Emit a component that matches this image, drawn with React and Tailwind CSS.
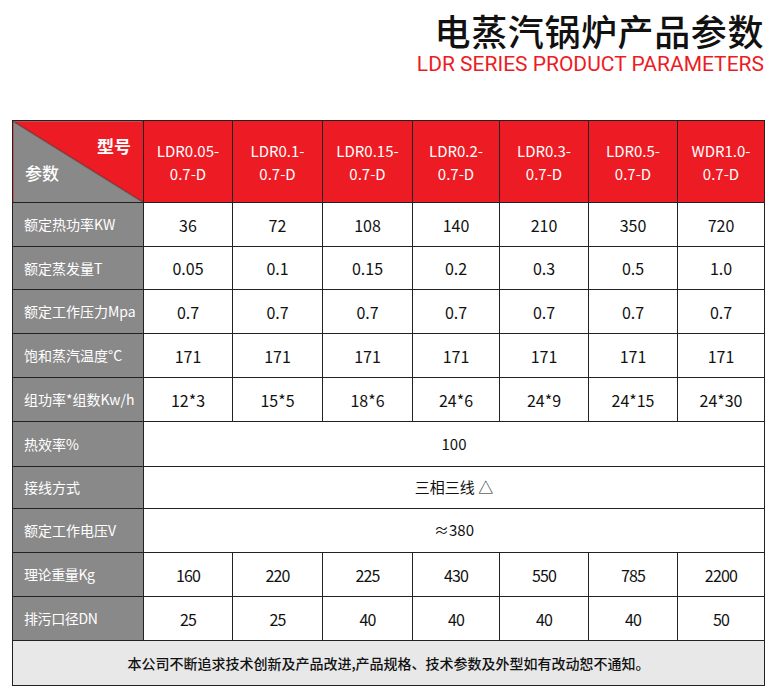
import React from "react";

const models = [
  ["LDR0.05-", "0.7-D"],
  ["LDR0.1-", "0.7-D"],
  ["LDR0.15-", "0.7-D"],
  ["LDR0.2-", "0.7-D"],
  ["LDR0.3-", "0.7-D"],
  ["LDR0.5-", "0.7-D"],
  ["WDR1.0-", "0.7-D"],
];

const rows = [
  { label: "额定热功率KW", h: "h-[44px]", vals: ["36", "72", "108", "140", "210", "350", "720"] },
  { label: "额定蒸发量T", h: "h-[43px]", vals: ["0.05", "0.1", "0.15", "0.2", "0.3", "0.5", "1.0"] },
  { label: "额定工作压力Mpa", h: "h-[44px]", vals: ["0.7", "0.7", "0.7", "0.7", "0.7", "0.7", "0.7"] },
  { label: "饱和蒸汽温度°C", h: "h-[44px]", vals: ["171", "171", "171", "171", "171", "171", "171"] },
  { label: "组功率*组数Kw/h", h: "h-[44px]", vals: ["12*3", "15*5", "18*6", "24*6", "24*9", "24*15", "24*30"] },
  { label: "热效率%", h: "h-[45px]", span: "100" },
  { label: "接线方式", h: "h-[42px]", span: "三相三线 △" },
  { label: "额定工作电压V", h: "h-[44px]", span: "≈380" },
  { label: "理论重量Kg", h: "h-[44px]", vals: ["160", "220", "225", "430", "550", "785", "2200"], narrow: true },
  { label: "排污口径DN", h: "h-[44px]", vals: ["25", "25", "40", "40", "40", "40", "50"], narrow: true },
];

const widths = ["w-[131px]", "w-[89px]", "w-[90px]", "w-[90px]", "w-[87px]", "w-[89px]", "w-[89px]", "w-[87px]"];

export default function App() {
  return (
    <div className="w-[782px] h-[698px] bg-white font-['Noto_Sans_CJK_SC',sans-serif] overflow-hidden">
      <div className="flex flex-col items-end pr-[18px] pt-[12px]">
        <div className="text-[36px] leading-[36px] font-medium text-[#111] tracking-[0.6px]">电蒸汽锅炉产品参数</div>
        <div className="mt-[5px] text-[21px] leading-[22px] text-[#ed1c24] font-['Roboto',sans-serif]">
          LDR SERIES PRODUCT PARAMETERS
        </div>
      </div>
      <div className="pl-[12px] pt-[45px]">
        <table className="border-collapse table-fixed w-[752px]">
          <colgroup>
            {widths.map((w, i) => (
              <col key={i} className={w} />
            ))}
          </colgroup>
          <tbody>
            <tr className="h-[82px]">
              <td className="relative border border-[#222] p-0 bg-[linear-gradient(to_top_right,#8a8989_49.6%,#222_50%,#ed1c24_50.4%)]">
                <span className="absolute left-[84px] top-[16px] text-[17px] font-bold text-white leading-none">型号</span>
                <span className="absolute left-[12px] top-[43px] text-[17px] font-medium text-white leading-none">参数</span>
              </td>
              {models.map((m, i) => (
                <td key={i} className="border border-[#222] bg-[#ed1c24] text-white text-center text-[15px] leading-[23px] p-0">
                  <div>{m[0]}</div>
                  <div>{m[1]}</div>
                </td>
              ))}
            </tr>
            {rows.map((r, i) => (
              <tr key={i} className={r.h}>
                <td className="border border-[#222] bg-[#8a8989] text-white text-[14px] pl-[11px] p-0 whitespace-nowrap">
                  <span className={r.narrow ? "inline-block tracking-[-0.4px]" : ""}>{r.label}</span>
                </td>
                {r.span ? (
                  <td colSpan={7} className="border border-[#222] text-center text-[15px] text-[#111] p-0">
                    {r.span}
                  </td>
                ) : (
                  r.vals.map((v, j) => (
                    <td key={j} className={`border border-[#222] text-center text-[#111] p-0 ${r.narrow ? "text-[16px] tracking-[-0.8px]" : "text-[16px]"}`}>
                      {v}
                    </td>
                  ))
                )}
              </tr>
            ))}
            <tr className="h-[45px]">
              <td colSpan={8} className="border border-[#222] bg-[#e8e8e8] text-center text-[14px] font-medium text-[#111] p-0">
                本公司不断追求技术创新及产品改进,产品规格、技术参数及外型如有改动恕不通知。
              </td>
            </tr>
          </tbody>
        </table>
      </div>
    </div>
  );
}
